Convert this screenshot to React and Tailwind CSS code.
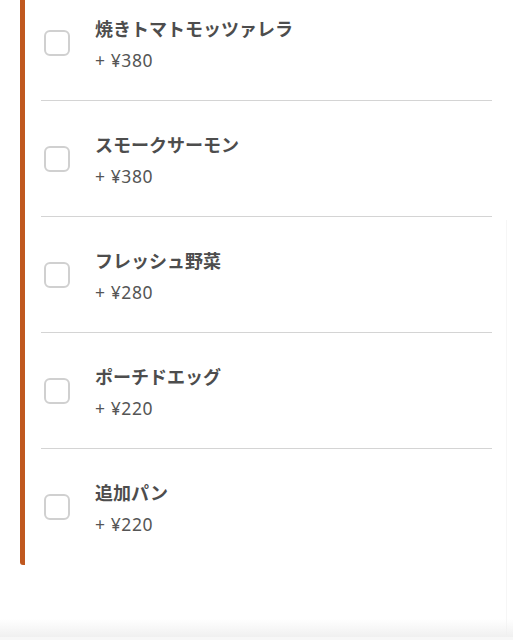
import React from "react";

const items = [
  { name: "焼きトマトモッツァレラ", price: "+ ¥380" },
  { name: "スモークサーモン", price: "+ ¥380" },
  { name: "フレッシュ野菜", price: "+ ¥280" },
  { name: "ポーチドエッグ", price: "+ ¥220" },
  { name: "追加パン", price: "+ ¥220" },
];

export default function App() {
  return (
    <div
      className="relative w-[513px] h-[640px] overflow-hidden bg-white"
      style={{ fontFamily: '"Noto Sans", "Noto Sans CJK JP", sans-serif' }}
    >
      <div className="mt-[-15px] ml-[20px] mr-[21px] border-l-[5px] border-[#c0581f] rounded-b-[3px]">
        <div className="pl-[16px]">
          {items.map((it, i) => (
            <div
              key={i}
              className={
                "flex items-center h-[116px] " +
                (i < items.length - 1 ? "border-b border-[#d4d4d4]" : "")
              }
            >
              <div className="ml-[3px] w-[26px] h-[26px] rounded-[6px] border-2 border-[#d0d0d0] bg-white shrink-0" />
              <div className="ml-[25px] flex flex-col pt-[2px]">
                <div className="text-[18px] leading-[28px] font-bold text-[#4d4d4d]">
                  {it.name}
                </div>
                <div className="mt-[4px] text-[17.5px] leading-[26px] text-[#555555] tracking-[0.6px]">
                  {it.price}
                </div>
              </div>
            </div>
          ))}
        </div>
      </div>
      <div className="absolute right-[6px] top-[220px] bottom-0 w-px bg-[#f6f6f6]" />
      <div className="absolute left-0 right-0 bottom-[3px] h-[18px] bg-gradient-to-b from-transparent to-[#f0f0f0]" />
      <div className="absolute left-0 right-0 bottom-0 h-[3px] bg-[#f7f7f7]" />
    </div>
  );
}
